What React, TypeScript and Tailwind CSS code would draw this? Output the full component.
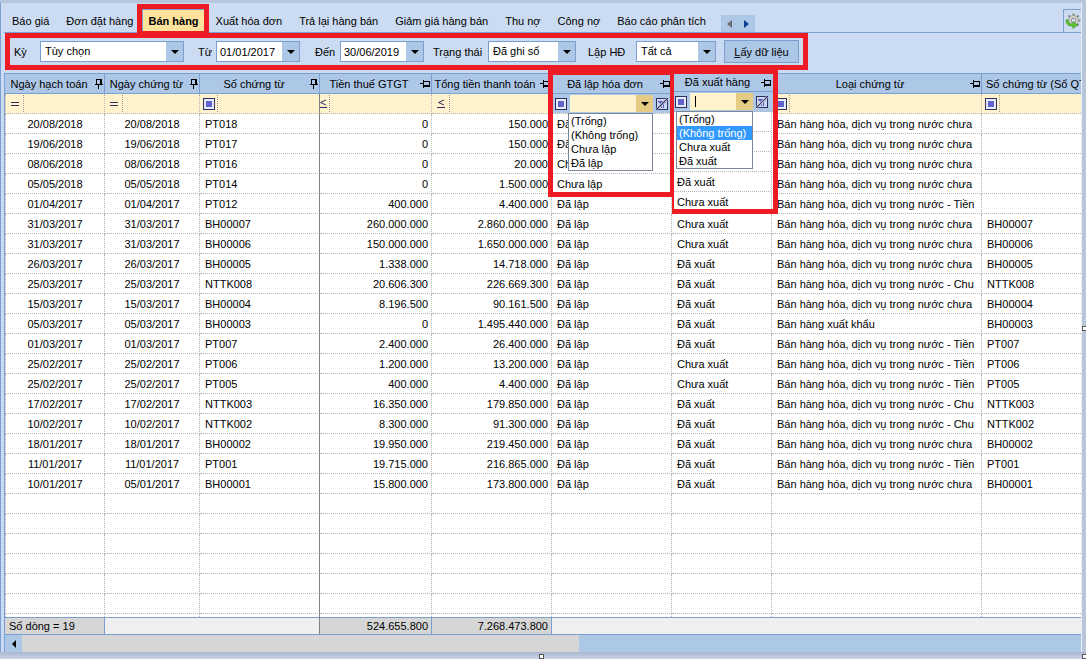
import React, { useState } from 'react';
import clsx from 'clsx';

const tabs = ['Báo giá', 'Đơn đặt hàng', 'Bán hàng', 'Xuất hóa đơn', 'Trả lại hàng bán', 'Giảm giá hàng bán', 'Thu nợ', 'Công nợ', 'Báo cáo phân tích'];

const SALE = 'Bán hàng hóa, dịch vụ trong nước chưa';
const SALE_CASH = 'Bán hàng hóa, dịch vụ trong nước - Tiền';
const SALE_BANK = 'Bán hàng hóa, dịch vụ trong nước - Chu';
const EXPORT = 'Bán hàng xuất khẩu';

// posted date, voucher date, voucher no, vat, total, invoiced, delivered, type, ledger no
const rows = [
  ['20/08/2018', '20/08/2018', 'PT018', '0', '150.000', 'Đã lập', 'Đã xuất', SALE, ''],
  ['19/06/2018', '19/06/2018', 'PT017', '0', '150.000', 'Đã lập', 'Đã xuất', SALE, ''],
  ['08/06/2018', '08/06/2018', 'PT016', '0', '20.000', 'Chưa lập', 'Chưa xuất', SALE, ''],
  ['05/05/2018', '05/05/2018', 'PT014', '0', '1.500.000', 'Chưa lập', 'Đã xuất', SALE, ''],
  ['01/04/2017', '01/04/2017', 'PT012', '400.000', '4.400.000', 'Đã lập', 'Chưa xuất', SALE_CASH, ''],
  ['31/03/2017', '31/03/2017', 'BH00007', '260.000.000', '2.860.000.000', 'Đã lập', 'Chưa xuất', SALE, 'BH00007'],
  ['31/03/2017', '31/03/2017', 'BH00006', '150.000.000', '1.650.000.000', 'Đã lập', 'Chưa xuất', SALE, 'BH00006'],
  ['26/03/2017', '26/03/2017', 'BH00005', '1.338.000', '14.718.000', 'Đã lập', 'Đã xuất', SALE, 'BH00005'],
  ['25/03/2017', '25/03/2017', 'NTTK008', '20.606.300', '226.669.300', 'Đã lập', 'Đã xuất', SALE_BANK, 'NTTK008'],
  ['15/03/2017', '15/03/2017', 'BH00004', '8.196.500', '90.161.500', 'Đã lập', 'Đã xuất', SALE, 'BH00004'],
  ['05/03/2017', '05/03/2017', 'BH00003', '0', '1.495.440.000', 'Đã lập', 'Đã xuất', EXPORT, 'BH00003'],
  ['01/03/2017', '01/03/2017', 'PT007', '2.400.000', '26.400.000', 'Đã lập', 'Đã xuất', SALE_CASH, 'PT007'],
  ['25/02/2017', '25/02/2017', 'PT006', '1.200.000', '13.200.000', 'Đã lập', 'Chưa xuất', SALE_CASH, 'PT006'],
  ['25/02/2017', '25/02/2017', 'PT005', '400.000', '4.400.000', 'Đã lập', 'Chưa xuất', SALE_CASH, 'PT005'],
  ['17/02/2017', '17/02/2017', 'NTTK003', '16.350.000', '179.850.000', 'Đã lập', 'Đã xuất', SALE_BANK, 'NTTK003'],
  ['10/02/2017', '10/02/2017', 'NTTK002', '8.300.000', '91.300.000', 'Đã lập', 'Đã xuất', SALE_BANK, 'NTTK002'],
  ['18/01/2017', '18/01/2017', 'BH00002', '19.950.000', '219.450.000', 'Đã lập', 'Đã xuất', SALE, 'BH00002'],
  ['11/01/2017', '11/01/2017', 'PT001', '19.715.000', '216.865.000', 'Đã lập', 'Đã xuất', SALE_CASH, 'PT001'],
  ['10/01/2017', '05/01/2017', 'BH00001', '15.800.000', '173.800.000', 'Đã lập', 'Đã xuất', SALE, 'BH00001'],
];

const columns = [
  { title: 'Ngày hạch toán', width: 'w-[100px]', align: 'text-center', op: 'eq', frozen: true },
  { title: 'Ngày chứng từ', width: 'w-[95px]', align: 'text-center', op: 'eq', frozen: true },
  { title: 'Số chứng từ', width: 'w-[120px]', align: 'pl-[5px]', op: 'box', frozen: true },
  { title: 'Tiền thuế GTGT', width: 'w-[112px]', align: 'text-right pr-[3px]', op: 'le' },
  { title: 'Tổng tiền thanh toán', width: 'w-[120px]', align: 'text-right pr-[3px]', op: 'le' },
  { title: 'Đã lập hóa đơn', width: 'w-[120px]', align: 'pl-[5px]', op: 'combo' },
  { title: 'Đã xuất hàng', width: 'w-[100px]', align: 'pl-[5px]', op: 'combo' },
  { title: 'Loại chứng từ', width: 'w-[210px]', align: 'pl-[5px]', op: 'box' },
  { title: 'Số chứng từ (Sổ QT', width: '', align: 'pl-[5px]', op: 'box' },
];

const Pin = ({ frozen }: { frozen?: boolean }) =>
  frozen ? (
    <svg width="8" height="10" viewBox="0 0 8 10" fill="#000" shapeRendering="crispEdges" className="shrink-0">
      <path d="M1 0h6v5h1v1H4v4H3V6H0V5h1zM2 1v4h3V1z" fillRule="evenodd" />
    </svg>
  ) : (
    <svg width="10" height="8" viewBox="0 0 10 8" fill="#000" shapeRendering="crispEdges" className="shrink-0">
      <path d="M3 0h1v1h6v6H4v1H3V4H0V3h3zM4 2v3h5V2z" fillRule="evenodd" />
    </svg>
  );

const BoxIcon = () => (
  <svg width="12" height="12" viewBox="0 0 12 12" shapeRendering="crispEdges" className="shrink-0">
    <rect x="0" y="0" width="12" height="12" fill="#2f2f63" />
    <rect x="1" y="1" width="10" height="10" fill="#e6ebfa" />
    <rect x="3" y="3" width="6" height="6" fill="#6363ce" />
  </svg>
);

const EqIcon = () => (
  <svg width="8" height="12" viewBox="0 0 8 12" shapeRendering="crispEdges">
    <path d="M0 4h8v1H0zM0 7h8v1H0z" fill="#2f2f63" />
  </svg>
);

const LeIcon = () => (
  <svg width="8" height="12" viewBox="0 0 8 12" className="shrink-0">
    <path d="M7 2L1.5 4.5L7 7" fill="none" stroke="#2f2f63" />
    <path d="M0 9h8v1H0z" fill="#2f2f63" />
  </svg>
);

const ClearFilterIcon = () => (
  <svg width="12" height="12" viewBox="0 0 12 12">
    <rect x="0.5" y="0.5" width="11" height="11" fill="#c9d6f0" stroke="#2f2f63" />
    <path d="M2 3h8v1L8 6v4H7V7L6 6v4H5V6L2 4z" fill="#5a5ac4" />
    <path d="M1 11L11 1" stroke="#fff" strokeWidth="2.4" />
    <path d="M1 11L11 1" stroke="#2f2f63" strokeWidth="1.2" />
  </svg>
);

const Down = () => (
  <svg width="8" height="4" viewBox="0 0 8 4" fill="#000">
    <path d="M0 0h8L4 4z" />
  </svg>
);

const Gear = () => (
  <svg width="16" height="16" viewBox="0 0 16 16">
    <g stroke="#84867e" strokeWidth="2">
      <path d="M8.500 0.500v14M1.500 7.500h14M3.500 2.500l10 10M13.500 2.500l-10 10" />
    </g>
    <circle cx="8.5" cy="7.5" r="5" fill="#d9dcd8" stroke="#9a9c94" />
    <circle cx="8.5" cy="7.5" r="2.5" fill="#cbdbf1" stroke="#84867e" />
    <path d="M1 7c0 4.500 3 6.500 7 6v2.500L12.500 12 8 8.500V11c-3 .3-4.500-1-5-4z" fill="#5cc42c" stroke="#3d971b" strokeWidth=".6" />
  </svg>
);

const Picker = ({ id, label, value, labelWidth, width, options }: { id: string; label: string; value: string; labelWidth: string; width: string; options?: string[] }) => (
  <>
    <label htmlFor={id} className={clsx('shrink-0 pt-0.5', labelWidth)}>
      {label}
    </label>
    <div className={clsx('relative flex h-[21px] shrink-0 border border-[#7ba0cf] bg-white', width)}>
      {options ? (
        <select id={id} defaultValue={value} className="w-full appearance-none pl-1 outline-none">
          {options.map((o) => (
            <option key={o}>{o}</option>
          ))}
        </select>
      ) : (
        <input id={id} defaultValue={value} className="w-full min-w-0 pt-0.5 pl-[3px] outline-none" />
      )}
      <span className="pointer-events-none absolute inset-y-0 right-0 flex w-[17px] items-center justify-center bg-[#adc7e7]">
        <Down />
      </span>
    </div>
  </>
);

const ComboFilter = ({ label, focused }: { label: string; focused?: boolean }) => (
  <div className={clsx('flex h-[19px] items-center bg-[#adc7e7]', focused ? 'pl-px' : 'pl-[3px]')}>
    <BoxIcon />
    <div className="ml-[3px] flex h-[17px] flex-1 bg-[#fff3ce]">
      {focused && <span className="my-[3px] ml-[5px] w-px bg-black"></span>}
      <input aria-label={label} className="w-full min-w-0 flex-1 outline-none" />
      <button aria-label={`Mở ${label}`} className="flex w-[17px] items-center justify-center bg-[#e5cb84]">
        <Down />
      </button>
    </div>
    <button aria-label={`Xóa lọc ${label}`} className="mx-[3px]">
      <ClearFilterIcon />
    </button>
  </div>
);

const OptionList = ({ items, active, className }: { items: string[]; active?: string; className: string }) => (
  <ul role="listbox" className={clsx('absolute border border-[#7a8798] bg-white leading-[14px]', className)}>
    {items.map((item) => (
      <li key={item} role="option" aria-selected={item === active} className={clsx('h-[14px] pl-0.5 whitespace-nowrap', item === active && 'bg-[#3399ff] text-white')}>
        {item}
      </li>
    ))}
  </ul>
);

const FilterCell = ({ col, index }: { col: (typeof columns)[number]; index: number }) => {
  if (col.op === 'combo') return <ComboFilter label={col.title} />;
  return (
    <div className="flex h-[19px]">
      <span className={clsx('my-px flex shrink-0 items-center overflow-hidden border-r border-dotted border-[#999]', index === 3 ? 'w-[10px] justify-end pr-0.5' : 'w-[18px] justify-center')}>
        {col.op === 'eq' && <EqIcon />}
        {col.op === 'box' && <BoxIcon />}
        {col.op === 'le' && <LeIcon />}
      </span>
      <input aria-label={`Lọc ${col.title}`} className="w-full min-w-0 pl-1 outline-none" />
    </div>
  );
};

const edge = (i: number) => clsx(i === 0 && 'border-l', i === 2 ? 'border-r border-r-[#808080] [border-right-style:solid]' : i < 8 && 'border-r');

const SalesTable = () => (
  <div className="relative">
    <table className="w-full table-fixed border-separate border-spacing-0 bg-white leading-[17px]">
      <thead>
        <tr>
          {columns.map((col) => (
            <th key={col.title} className={clsx('h-[21px] overflow-hidden border-y border-r border-[#7ba0cf] bg-[#adc7e7] p-0 font-normal last:border-r-0', col.width)}>
              <div className="flex items-center gap-0.5 pr-px">
                <span className={clsx('flex-1 pt-0.5 whitespace-nowrap', !col.width && 'pl-1 text-left')}>{col.title}</span>
                {col.width && <Pin frozen={col.frozen} />}
              </div>
            </th>
          ))}
        </tr>
        <tr className="bg-[#fff3ce]">
          {columns.map((col, i) => (
            <td key={col.title} className={clsx('h-5 border-b border-dotted border-[#b5b5b5] p-0', edge(i))}>
              <FilterCell col={col} index={i} />
            </td>
          ))}
        </tr>
      </thead>
      <tbody>
        {rows.map((row) => (
          <tr key={row[2]}>
            {row.map((cell, i) => (
              <td key={i} className={clsx('h-5 overflow-hidden border-b border-dotted border-[#b5b5b5] p-0 pt-0.5 whitespace-nowrap', edge(i), columns[i].align)}>
                {cell}
              </td>
            ))}
          </tr>
        ))}
        {[0, 1, 2, 3, 4, 5].map((n) => (
          <tr key={n}>
            {columns.map((col, i) => (
              <td key={col.title} className={clsx('h-5 border-b border-dotted border-[#b5b5b5] p-0', edge(i))}></td>
            ))}
          </tr>
        ))}
        <tr>
          {columns.map((col, i) => (
            <td key={col.title} className={clsx('h-[3px] border-dotted border-[#b5b5b5] p-0', edge(i))}></td>
          ))}
        </tr>
      </tbody>
      <tfoot className="leading-4">
        <tr className="bg-[#efefef]">
          <td className="h-[18px] border-y border-r border-[#7ba0cf] bg-[#d6d6d6] p-0 pl-1">Số dòng = 19</td>
          <td colSpan={2} className="border-y border-r border-[#7ba0cf] border-r-[#808080] p-0"></td>
          <td className="border-y border-r border-[#7ba0cf] bg-[#d6d6d6] p-0 pr-[3px] text-right">524.655.800</td>
          <td className="border-y border-r border-[#7ba0cf] bg-[#d6d6d6] p-0 pr-[3px] text-right">7.268.473.800</td>
          <td colSpan={4} className="border-y border-[#7ba0cf] p-0"></td>
        </tr>
      </tfoot>
    </table>

    {/* invoice status menu */}
    <OptionList items={['(Trống)', '(Không trống)', 'Chưa lập', 'Đã lập']} className="top-10 left-[563px] w-[85px]" />
    <div className="pointer-events-none absolute -top-[3px] left-[543px] h-[127px] w-[125px] border-5 border-r-3 border-[#ed1c24]"></div>

    {/* delivery status menu */}
    <div className="absolute -top-[3px] left-[667px] w-[106px] border-5 border-t-4 border-l-2 border-[#ed1c24] bg-white">
      <div className="flex h-[18px] items-center border-b border-[#7ba0cf] bg-[#adc7e7] pr-0.5">
        <span className="flex-1 text-center">Đã xuất hàng</span>
        <Pin />
      </div>
      <div className="border-b border-dotted border-[#b5b5b5] bg-[#adc7e7] pr-0.5">
        <ComboFilter label="Đã xuất hàng (lọc)" focused />
      </div>
      <div className="mr-px border-r border-dotted border-[#b5b5b5] leading-[17px]">
        {['', '', '', 'Đã xuất'].map((text, i) => (
          <div key={i} className="h-5 border-b border-dotted border-[#b5b5b5] pt-0.5 pl-[3px]">
            {text}
          </div>
        ))}
        <div className="h-[17px] pt-0.5 pl-[3px]">Chưa xuất</div>
      </div>
      <OptionList items={['(Trống)', '(Không trống)', 'Chưa xuất', 'Đã xuất']} active="(Không trống)" className="top-[37px] left-0.5 w-[77px]" />
    </div>
  </div>
);

const Handle = ({ className }: { className: string }) => <span className={clsx('absolute size-[5px] border border-[#555] bg-white', className)}></span>;

export default function App() {
  const [tab, setTab] = useState('Bán hàng');
  return (
    <div lang="vi" className="relative flex min-h-screen w-full flex-col overflow-hidden bg-[#b9c5d9] font-['Liberation_Sans',Arial,sans-serif] text-[11px] leading-[19px] text-black">
      <div className="mt-0.5 mr-1 border-x border-t border-t-[#adc7e7] border-r-[#e9eff8] border-l-[#7ba0cf] bg-[#cbdbf1] pl-[3px]">
        <nav className="flex h-[30px] items-end border-b border-[#7ba0cf]">
          <div className="flex items-center pb-px">
            {tabs.map((name) => (
              <button
                key={name}
                onClick={() => setTab(name)}
                className={clsx('h-[22px] pt-0.5 whitespace-nowrap', name === tab ? 'relative mr-1 border-t border-l border-[#7ba0cf] bg-[#ffe39c] px-[5px] font-bold ring-5 ring-[#ed1c24]' : 'pr-[9px] pl-2')}
              >
                {name}
              </button>
            ))}
          </div>
          <div className="ml-1.5 flex h-[17px] w-[34px] items-center justify-around bg-[#adc7e7]">
            <button aria-label="Tab trước">
              <svg width="5" height="8" viewBox="0 0 5 8" fill="#6d6d6d">
                <path d="M5 0v8L0 4z" />
              </svg>
            </button>
            <button aria-label="Tab sau">
              <svg width="5" height="8" viewBox="0 0 5 8" fill="#0a3f94">
                <path d="M0 0v8L5 4z" />
              </svg>
            </button>
          </div>
          <button aria-label="Tùy chỉnh" className="ml-auto flex h-[23px] w-[18px] items-center justify-center border-t border-l border-[#7ba0cf]">
            <Gear />
          </button>
        </nav>

        <form onSubmit={(e) => e.preventDefault()} className="mb-[3px] ml-px flex h-[37px] w-[803px] items-center border-5 border-[#ed1c24] pl-1">
          <Picker id="period" label="Kỳ" value="Tùy chọn" labelWidth="w-[26px]" width="w-[144px]" options={['Tùy chọn', 'Tháng này', 'Quý này', 'Năm nay']} />
          <Picker id="from" label="Từ" value="01/01/2017" labelWidth="ml-[14px] w-[18px]" width="w-[84px]" />
          <Picker id="to" label="Đến" value="30/06/2019" labelWidth="ml-[15px] w-[25px]" width="w-[84px]" />
          <Picker id="status" label="Trạng thái" value="Đã ghi sổ" labelWidth="ml-[9px] w-[55px]" width="w-[88px]" options={['Đã ghi sổ', 'Chưa ghi sổ']} />
          <Picker id="invoice" label="Lập HĐ" value="Tất cả" labelWidth="ml-3 w-12" width="w-20" options={['Tất cả', 'Đã lập', 'Chưa lập']} />
          <button className="ml-2 h-[23px] w-[75px] border border-[#7ba0cf] bg-[#adc7e7] pt-0.5">
            <u>L</u>ấy dữ liệu
          </button>
        </form>

        <div className="border-l border-[#7ba0cf]">
          <SalesTable />
          <div className="flex h-[17px] bg-[#adc7e7]">
            <button aria-label="Cuộn trái" className="flex w-[17px] items-center justify-center">
              <svg width="4" height="8" viewBox="0 0 4 8" fill="#000">
                <path d="M4 0v8L0 4z" />
              </svg>
            </button>
            <div className="w-[557px] bg-[#d6d6d6]"></div>
          </div>
        </div>
      </div>
      <div className="min-h-[7px] flex-1 bg-linear-to-b from-[#a9b6cc] to-[#c9d4e6]"></div>
      <Handle className="bottom-0 left-1/2 -ml-1" />
      <Handle className="top-1/2 -right-px -mt-1" />
      <Handle className="-right-px bottom-0" />
    </div>
  );
}
